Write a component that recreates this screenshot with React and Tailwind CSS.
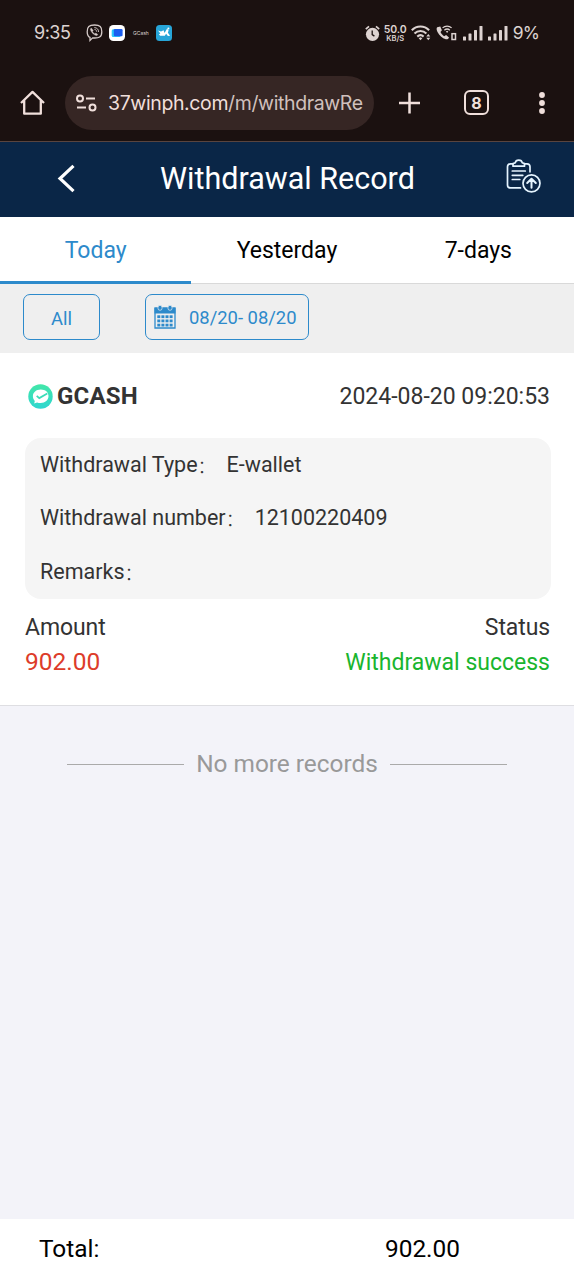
const TABS = ["Today", "Yesterday", "7-days"];

const DETAILS = [
  { label: "Withdrawal Type", value: "E-wallet" },
  { label: "Withdrawal number", value: "12100220409" },
  { label: "Remarks", value: "" },
];

function ViberIcon() {
  return (
    <svg width="17" height="18" viewBox="0 0 17 18" fill="none" stroke="#d5cac8">
      <path
        d="M8.5 1C3 1 1.2 2.7 1.2 7.7c0 3.200.8 4.900 2.800 5.700v3l2.600-2.500c6.500.5 9.200-.7 9.200-6.200C15.800 2.700 14 1 8.500 1Z"
        strokeWidth="1.300"
      />
      <path
        d="M5.300 4.100c-1 .5-1.200 1.200-.6 2.500 1 2.300 2.700 4 5.200 5 .9.300 1.700-.2 1.900-1.100l-1.900-1.400-1 .7C7.600 9.300 6.900 8.500 6.500 7.300l.8-.8Z"
        fill="#d5cac8"
        strokeWidth="0.300"
      />
      <path d="M8.700 3.600c2.400.2 3.800 1.600 3.900 4M8.900 5.500c1.100.1 1.700.8 1.800 1.900" strokeWidth="0.900" strokeLinecap="round" />
    </svg>
  );
}

function WalletAppIcon() {
  return (
    <svg width="16" height="16" viewBox="0 0 16 16">
      <rect width="16" height="16" rx="4.500" fill="#fff" />
      <rect x="2.700" y="4.200" width="9" height="7.800" rx="1.500" fill="#29c8fa" />
      <rect x="4.800" y="4" width="8.800" height="7.300" rx="1.200" fill="#1a5df0" />
    </svg>
  );
}

function RiderAppIcon() {
  return (
    <svg width="16" height="16" viewBox="0 0 16 16">
      <rect width="16" height="16" rx="3.500" fill="#27a5d8" />
      <path d="M2 5.500 5 6.500 7.600 5.300 8.500 8 11 3.800l1.600 1.500-.7 2.500 2.200 2.900-2.200.2-1.800-2.100-1.300 2H4.200L2.800 9.200l1.600-.8Z" fill="#fff" />
      <circle cx="12.400" cy="3.600" r="1" fill="#fff" />
    </svg>
  );
}

function AlarmIcon() {
  return (
    <svg width="15" height="17" viewBox="0 0 15 17" fill="none">
      <circle cx="7.500" cy="9.300" r="6.600" fill="#ddd3d1" />
      <path d="M.8 4.200 4 1.400M14.200 4.200 11 1.400" stroke="#ddd3d1" strokeWidth="1.700" />
      <path d="M7.200 5.600v4l2.200 1.500" stroke="#1b1110" strokeWidth="1.300" />
    </svg>
  );
}

function WifiIcon() {
  return (
    <svg width="20" height="16" viewBox="0 0 20 16" fill="none" stroke="#ddd3d1">
      <path d="M.8 5.200c4.800-4.900 12.500-4.900 17.300 0M3.500 8.500c3.400-3.300 8.500-3.300 11.900 0M6.300 11.600c1.900-1.700 4.400-1.700 6.300 0" strokeWidth="2.100" />
      <path d="m7.700 13.200 1.800-1 1.800 1-1.800 2Z" fill="#ddd3d1" stroke="none" />
      <path d="m15.300 11.500 2-2.400 2 2.400ZM15.300 12.800l2 2.400 2-2.400Z" fill="#ddd3d1" stroke="none" />
    </svg>
  );
}

function WifiCallIcon() {
  return (
    <svg width="21" height="16" viewBox="0 0 21 16" fill="none">
      <path
        d="M1.200 2.200C.3 3.100.5 5 1.500 6.900c1.900 3.700 4.700 6.200 8.300 7.300 1.600.4 2.800-.3 3.200-1.700l-2.900-2.400-2 1.100C6.500 10.200 5.200 8.700 4.500 7L5.900 5.300 4.300 1.600Z"
        fill="#ddd3d1"
      />
      <path d="M6.600 2.900c2.500-2.400 6.500-2.400 9 0M8.400 5.200c1.500-1.300 3.900-1.300 5.400 0" stroke="#ddd3d1" strokeWidth="1.300" />
      <path d="m9.900 6.600 1.200-.8 1.200.8-1.200 1.500Z" fill="#ddd3d1" />
      <rect x="16" y="8.700" width="3.500" height="5.800" stroke="#ddd3d1" strokeWidth="1.500" />
    </svg>
  );
}

function SignalIcon() {
  return (
    <svg width="20" height="15" viewBox="0 0 20 15" fill="#ddd3d1">
      <rect x="0" y="10.500" width="3" height="4" rx=".6" />
      <rect x="5.500" y="7.500" width="3" height="7" rx=".6" />
      <rect x="11" y="4" width="3" height="10.500" rx=".6" />
      <rect x="16.500" y="0" width="3" height="14.500" rx=".6" />
    </svg>
  );
}

function StatusBar() {
  return (
    <div className="flex h-[66px] items-center pl-[34px] font-[Inter,sans-serif] text-[#ddd3d1]">
      <span className="w-[52px] text-[18px] leading-none tracking-[-0.500px]">9:35</span>
      <div className="flex items-center">
        <ViberIcon />
        <span className="ml-[6px]"><WalletAppIcon /></span>
        <span className="ml-[8px] w-[22px] text-[5px] leading-none">GCash</span>
        <span className="ml-px"><RiderAppIcon /></span>
      </div>
      <div className="ml-auto flex items-center pr-[35px]">
        <AlarmIcon />
        <div className="ml-[4px] flex w-[23px] flex-col items-center font-semibold">
          <span className="text-[10.500px] leading-[11px] tracking-[-0.100px]">50.0</span>
          <span className="text-[7.500px] leading-[8px]">KB/S</span>
        </div>
        <span className="ml-[4px]"><WifiIcon /></span>
        <span className="ml-[5px]"><WifiCallIcon /></span>
        <span className="ml-[6px]"><SignalIcon /></span>
        <span className="ml-[5px]"><SignalIcon /></span>
        <span className="ml-[5px] text-[17.500px] leading-none tracking-[-0.900px]">9%</span>
      </div>
    </div>
  );
}

function BrowserBar() {
  return (
    <div className="flex h-[75px] items-center pb-[2px] pl-[20px] text-[#f0dfdb]">
      <svg width="25" height="26" viewBox="0 0 25 26" fill="none" stroke="currentColor" strokeWidth="2.300">
        <path d="M1 13 12.500 1.900 24 13M4.200 10.500v13.200h16.600V10.500" strokeLinejoin="round" />
      </svg>
      <div className="ml-[20px] flex h-[54px] w-[309px] items-center overflow-hidden rounded-full bg-[#362624] pl-[11px]">
        <svg width="21" height="18" viewBox="0 0 21 18" fill="none" stroke="currentColor" strokeWidth="2">
          <circle cx="4" cy="4.600" r="3" />
          <path d="M10 4.600h9M1 13.400h9" />
          <circle cx="16.500" cy="13.400" r="3" />
        </svg>
        <span className="ml-[11px] whitespace-nowrap pt-[2px] font-[Inter,sans-serif] text-[19.500px] leading-none tracking-[-0.380px]">
          37winph.com<span className="text-[#d0c0bd]">/m/withdrawRe</span>
        </span>
      </div>
      <svg className="ml-[25px]" width="21" height="22" viewBox="0 0 21 22" stroke="currentColor" strokeWidth="2.500">
        <path d="M0 11h21M10.500.5v21" />
      </svg>
      <div className="ml-[44px] flex h-[25px] w-[25px] items-center justify-center rounded-[6px] border-[2px] border-current font-[Inter,sans-serif] text-[16px] font-bold leading-none">
        8
      </div>
      <svg className="ml-[49px]" width="8" height="22" viewBox="0 0 8 22" fill="currentColor">
        <circle cx="4" cy="3" r="2.900" />
        <circle cx="4" cy="11" r="2.900" />
        <circle cx="4" cy="19" r="2.900" />
      </svg>
    </div>
  );
}

function PageHeader() {
  return (
    <header className="flex h-[75px] items-center bg-[#0a2647] pb-[2px] text-white">
      <svg className="ml-[57px]" width="19" height="29" viewBox="0 0 19 29" fill="none" stroke="currentColor" strokeWidth="3.200">
        <path d="M16.500 1.800 3 14.500l13.500 12.700" />
      </svg>
      <h1 className="ml-[84px] w-[300px] whitespace-nowrap pt-[2px] text-[30.500px] leading-none">Withdrawal Record</h1>
      <svg className="mb-[4px] ml-[46px]" width="35" height="35" viewBox="0 0 35 35" fill="none" stroke="#e5f4ff" strokeWidth="1.700" strokeLinecap="round" strokeLinejoin="round">
        <path d="M7 4.800H4.500C2.500 4.800 1.500 6 1.500 7.800V26c0 1.800 1 2.900 3 2.900h10M18.500 4.800H21c2 0 3 1.200 3 3v5" />
        <path d="M7 7.200h11.500V4.600l-2.300-.9c-.5-3.500-6.400-3.500-6.900 0L7 4.600Z" />
        <path d="M6.300 12h13M6.300 16.300h10.500M6.300 20.500h7.500" />
        <circle cx="25.500" cy="24.300" r="8.500" />
        <path d="M25.500 28.700v-8.500M21.200 24l4.300-4.300 4.300 4.300" strokeWidth="2" />
      </svg>
    </header>
  );
}

function CalendarIcon() {
  return (
    <svg width="22" height="24" viewBox="0 0 22 24">
      <path d="M1 3h20v20H1Z" fill="none" stroke="#2d8acb" strokeWidth="1.300" />
      <path d="M.5 3h21v5.500H.5Z" fill="#2d8acb" />
      <rect x="4" y=".3" width="4" height="5" rx="2" fill="#2d8acb" stroke="#efefef" strokeWidth=".7" />
      <rect x="14" y=".3" width="4" height="5" rx="2" fill="#2d8acb" stroke="#efefef" strokeWidth=".7" />
      {[10.3, 14.5, 18.7].map((y) =>
        [3.3, 7.4, 11.5, 15.6].map((x) => (
          <rect key={`${x}-${y}`} x={x} y={y} width="3" height="2.800" fill="#2d8acb" />
        ))
      )}
    </svg>
  );
}

function GcashIcon() {
  return (
    <svg width="25" height="25" viewBox="0 0 25 25">
      <defs>
        <linearGradient id="mint" x1="0" y1="0" x2="0" y2="1">
          <stop offset="0" stopColor="#42e7a8" />
          <stop offset="1" stopColor="#2fd6d0" />
        </linearGradient>
      </defs>
      <circle cx="12.500" cy="12.500" r="12.200" fill="url(#mint)" />
      <path d="M12.800 5.500c4.600 0 7.700 2.800 7.700 6.600 0 4.100-3.300 6.900-7.800 6.900-1.400 0-2.600-.2-3.600-.6l-2.900 1.200.6-2.700C5.500 15.600 4.900 14 4.900 12.300c0-4 3.300-6.800 7.900-6.800Z" fill="#fff" />
      <path d="m8.700 11.800 2.600 2.300 8-4.600" fill="none" stroke="#3bdcb8" strokeWidth="1.700" />
    </svg>
  );
}

function RecordCard() {
  return (
    <section className="h-[353px] border-b border-[#dedee2] bg-white pl-[25px] pr-[23px] text-[22px] leading-[26px] text-[#333]">
      <div className="flex h-[85px] items-center justify-between pt-px">
        <div className="flex items-center pl-[3px]">
          <GcashIcon />
          <span className="ml-[4px] text-[24px] font-bold tracking-[0.200px]">GCASH</span>
        </div>
        <span className="pr-px pt-[2px] text-[23px]">2024-08-20 09:20:53</span>
      </div>
      <div className="flex h-[161px] flex-col rounded-[16px] bg-[#f5f5f5] pl-[15px] text-[21.500px]">
        {DETAILS.map((item) => (
          <div key={item.label} className="flex h-[53.600px] items-center">
            <span>{item.label}</span>
            <span className="w-[29px] font-['Noto_Sans_CJK_SC',sans-serif] text-[18px] font-light">：</span>
            <span>{item.value}</span>
          </div>
        ))}
      </div>
      <div className="mt-[16px] flex justify-between pr-px text-[23px]">
        <span className="tracking-[-0.100px]">Amount</span>
        <span className="tracking-[-0.100px]">Status</span>
      </div>
      <div className="mt-[8px] flex items-start justify-between pr-px">
        <span className="text-[24.500px] text-[#dd3c2a]">902.00</span>
        <span className="pt-px text-[23px] text-[#19b52e]">Withdrawal success</span>
      </div>
    </section>
  );
}

export default function App() {
  return (
    <div className="flex h-[1280px] w-[574px] flex-col overflow-hidden bg-[#f3f3f9] font-[Roboto,sans-serif]">
      <div className="h-[142px] border-b border-[#59443f] bg-[#1b1110]">
        <StatusBar />
        <BrowserBar />
      </div>
      <PageHeader />
      <nav className="grid h-[67px] grid-cols-3 border-b border-[#d9d9d9] bg-white text-[23px]">
        {TABS.map((tab, i) => (
          <button
            key={tab}
            className={`-mb-px pt-[5px] ${
              i === 0 ? "border-b-[3px] border-[#2d8acb] text-[#2d8acb]" : "border-b-[3px] border-transparent text-black"
            }`}
          >
            {tab}
          </button>
        ))}
      </nav>
      <div className="flex h-[69px] items-center bg-[#efefef] pb-[3px] pl-[23px] text-[18.400px] text-[#2d8acb]">
        <button className="h-[46px] w-[77px] rounded-[7px] border border-[#2d8acb] pt-[3px]">All</button>
        <button className="ml-[45px] flex h-[46px] w-[164px] items-center rounded-[7px] border border-[#2d8acb] pl-[8px]">
          <CalendarIcon />
          <span className="ml-[13px] whitespace-nowrap pt-[2px]">08/20- 08/20</span>
        </button>
      </div>
      <RecordCard />
      <div className="mt-[43px] flex items-center justify-center gap-[12px] text-[24.400px] leading-[29px] text-[#999]">
        <span className="mt-px h-px w-[117px] bg-[#aaa]" />
        <span>No more records</span>
        <span className="mt-px h-px w-[117px] bg-[#aaa]" />
      </div>
      <footer className="mt-auto grid h-[61px] grid-cols-[346px_auto] items-center bg-white pl-[39px] text-[24.400px] text-black">
        <span>Total:</span>
        <span>902.00</span>
      </footer>
    </div>
  );
}
